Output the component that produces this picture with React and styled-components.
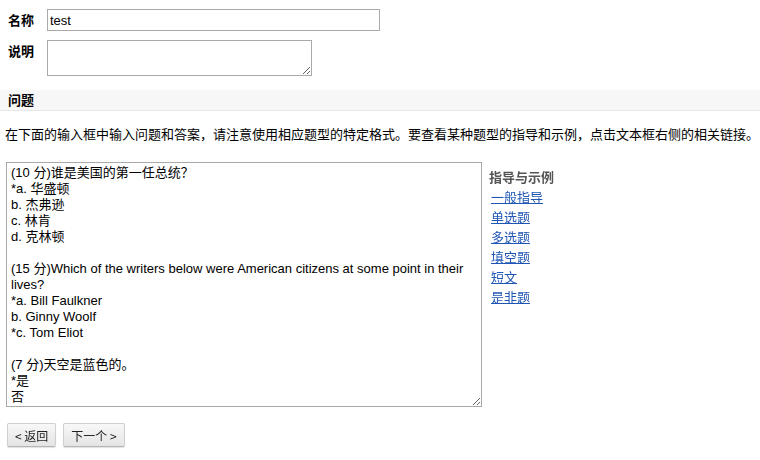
import React from "react";
import styled, { createGlobalStyle } from "styled-components";

const Global = createGlobalStyle`
	html, body {
		margin: 0;
		background: #fff;
		font-family: "Liberation Sans", Arial, "Noto Sans CJK SC", sans-serif;
		font-size: 13px;
		color: #000;
	}
`;

const Page = styled.div`
	width: 760px;
	height: 460px;
	overflow: hidden;
	padding-top: 9px;
	box-sizing: border-box;
`;

const FieldRow = styled.div`
	display: flex;
	align-items: flex-start;
	padding-left: 8px;
	margin-bottom: ${(p) => p.gap || 0}px;
`;

const Label = styled.label`
	width: 39px;
	padding-top: 3px;
	font-weight: bold;
	font-size: 13px;
	font-family: "Noto Sans CJK SC", sans-serif;
	line-height: 16px;
`;

const TextInput = styled.input`
	width: 333px;
	height: 22px;
	box-sizing: border-box;
	border: 1px solid #a9a9a9;
	padding: 0 2px;
	font-family: "Liberation Sans", Arial, sans-serif;
	font-size: 13px;
	outline: none;
`;

const SmallArea = styled.textarea`
	width: 265px;
	height: 36px;
	box-sizing: border-box;
	border: 1px solid #a9a9a9;
	outline: none;
	margin: 0;
`;

const SectionHeader = styled.div`
	margin-top: 14px;
	height: 20px;
	line-height: 20px;
	background: #f7f7f7;
	border-bottom: 1px solid #e6e6e6;
	padding-left: 8px;
	font-weight: bold;
	font-family: "Noto Sans CJK SC", sans-serif;
`;

const Intro = styled.p`
	margin: 14px 0 0 5px;
	line-height: 17px;
	font-family: "Noto Sans CJK SC", sans-serif;
	font-size: 13px;
	white-space: nowrap;
`;

const Editor = styled.div`
	display: flex;
	align-items: flex-start;
	margin: 20px 0 0 6px;
`;

const QuestionArea = styled.textarea`
	width: 476px;
	height: 245px;
	box-sizing: border-box;
	border: 1px solid #a9a9a9;
	padding: 2px 4px;
	margin: 0;
	font-family: "Liberation Sans", Arial, "Noto Sans CJK SC", sans-serif;
	font-size: 13px;
	line-height: 16px;
	outline: none;
	resize: both;
`;

const Guide = styled.div`
	margin-left: 7px;
	padding-top: 5px;
	display: flex;
	flex-direction: column;
	font-family: "Noto Sans CJK SC", sans-serif;
`;

const GuideTitle = styled.div`
	color: #555;
	font-weight: bold;
	line-height: 20px;
`;

const GuideLink = styled.a`
	color: #1f56b3;
	text-decoration: underline;
	line-height: 20px;
	padding-left: 2px;
	cursor: pointer;
`;

const Buttons = styled.div`
	display: flex;
	gap: 7px;
	margin: 16px 0 0 7px;
`;

const Button = styled.button`
	height: 24px;
	padding: 0 7px;
	border: 1px solid #d0d0d0;
	border-bottom-color: #b5b5b5;
	border-radius: 2px;
	background: linear-gradient(#f8f8f8, #e4e4e4);
	box-shadow: 0 1px 1px rgba(0, 0, 0, 0.12);
	font-family: "Noto Sans CJK SC", sans-serif;
	font-size: 12px;
	color: #222;
	cursor: pointer;
`;

const questions = `(10 分)谁是美国的第一任总统？
*a. 华盛顿
b. 杰弗逊
c. 林肯
d. 克林顿

(15 分)Which of the writers below were American citizens at some point in their lives?
*a. Bill Faulkner
b. Ginny Woolf
*c. Tom Eliot

(7 分)天空是蓝色的。
*是
否`;

const links = ["一般指导", "单选题", "多选题", "填空题", "短文", "是非题"];

const App = () => {
	return (
		<>
			<Global />
			<Page>
				<FieldRow gap={9}>
					<Label>名称</Label>
					<TextInput defaultValue="test" />
				</FieldRow>
				<FieldRow>
					<Label>说明</Label>
					<SmallArea />
				</FieldRow>
				<SectionHeader>问题</SectionHeader>
				<Intro>
					在下面的输入框中输入问题和答案，请注意使用相应题型的特定格式。要查看某种题型的指导和示例，点击文本框右侧的相关链接。
				</Intro>
				<Editor>
					<QuestionArea defaultValue={questions} />
					<Guide>
						<GuideTitle>指导与示例</GuideTitle>
						{links.map((l) => (
							<GuideLink key={l}>{l}</GuideLink>
						))}
					</Guide>
				</Editor>
				<Buttons>
					<Button>&lt; 返回</Button>
					<Button>下一个 &gt;</Button>
				</Buttons>
			</Page>
		</>
	);
};

export default App;
